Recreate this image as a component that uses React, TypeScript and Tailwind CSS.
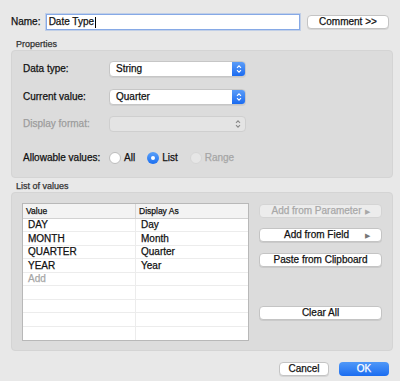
import React from "react";

const font = { fontFamily: '"Liberation Sans", Arial, sans-serif' };

function Button({
  children,
  className = "",
  disabled = false,
  arrow = false,
}: {
  children: React.ReactNode;
  className?: string;
  disabled?: boolean;
  arrow?: boolean;
}) {
  return (
    <div
      className={`relative flex items-center justify-center h-[14px] rounded-[4px] border text-[10px] leading-none ${
        disabled
          ? "bg-[#ececec] border-[#d4d4d4] text-[#a8a8a8]"
          : "bg-white border-[#c4c4c4] text-[#111] shadow-[0_1px_0_rgba(0,0,0,0.08)]"
      } ${className}`}
    >
      <span className={arrow ? "pr-[8px]" : ""}>{children}</span>
      {arrow && (
        <span
          className={`absolute right-[11px] top-1/2 -translate-y-1/2 text-[7px] [-webkit-text-stroke:0px] ${
            disabled ? "text-[#a8a8a8]" : "text-[#777]"
          }`}
        >
          ▶
        </span>
      )}
    </div>
  );
}

function Chevrons({ color }: { color: string }) {
  return (
    <svg width="6" height="10" viewBox="0 0 6 10" fill="none">
      <path d="M1 3.8 L3 1.8 L5 3.8" stroke={color} strokeWidth="1.1" />
      <path d="M1 6.2 L3 8.2 L5 6.2" stroke={color} strokeWidth="1.1" />
    </svg>
  );
}

function Select({ value, disabled = false }: { value?: string; disabled?: boolean }) {
  if (disabled) {
    return (
      <div className="flex items-center w-[137px] h-[16px] rounded-[4px] border border-[#cfcfcf] bg-[#e4e4e4]">
        <div className="flex-1" />
        <div className="w-[14px] flex items-center justify-center">
          <Chevrons color="#8a8a8a" />
        </div>
      </div>
    );
  }
  return (
    <div className="flex items-center w-[137px] h-[16px] rounded-[4px] border border-[#c6c6c6] bg-white shadow-[0_1px_0_rgba(0,0,0,0.06)] overflow-hidden">
      <div className="flex-1 pl-[6px] text-[10px] leading-none text-[#111]">{value}</div>
      <div className="w-[13px] h-full flex items-center justify-center bg-gradient-to-b from-[#5a9cf8] to-[#1a6bf0]">
        <Chevrons color="#ffffff" />
      </div>
    </div>
  );
}

function Radio({ checked = false, disabled = false, label }: { checked?: boolean; disabled?: boolean; label: string }) {
  return (
    <div className="flex items-center gap-[3px]">
      {checked ? (
        <div className="w-[12px] h-[12px] rounded-full bg-gradient-to-b from-[#5aa0f8] to-[#1a6ff0] flex items-center justify-center">
          <div className="w-[4px] h-[4px] rounded-full bg-white" />
        </div>
      ) : (
        <div
          className={`w-[12px] h-[12px] rounded-full border ${
            disabled ? "border-[#d6d6d6] bg-[#e6e6e6]" : "border-[#bdbdbd] bg-white"
          }`}
        />
      )}
      <span className={`text-[10px] leading-none ${disabled ? "text-[#a6a6a6]" : "text-[#111]"}`}>{label}</span>
    </div>
  );
}

const rows: [string, string, boolean?][] = [
  ["DAY", "Day"],
  ["MONTH", "Month"],
  ["QUARTER", "Quarter"],
  ["YEAR", "Year"],
  ["Add", "", true],
  ["", ""],
  ["", ""],
  ["", ""],
  ["", ""],
];

export default function App() {
  return (
    <div
      style={font}
      className="w-[400px] h-[381px] bg-[#e8e8e8] px-[11px] pt-[14px] text-[#111] overflow-hidden [-webkit-text-stroke:0.25px]"
    >
      {/* name row */}
      <div className="flex items-center h-[16px]">
        <span className="w-[35px] text-[10px] leading-none">Name:</span>
        <div className="w-[257px] h-[16px] bg-white border border-[#86a9e6] shadow-[0_0_0_1px_rgba(120,160,230,0.35)] flex items-center pl-[2px] text-[10px] leading-none">
          Date Type<span className="w-px h-[11px] bg-black ml-px" />
        </div>
        <Button className="ml-[7px] w-[83px]">Comment &gt;&gt;</Button>
      </div>

      {/* properties */}
      <div className="mt-[8px] pl-[5px] text-[9px] leading-[12px] text-[#333]">Properties</div>
      <div className="h-[128px] w-[382px] rounded-[4px] bg-[#dcdcdc] border border-[#d4d4d4] pl-[11px] pt-[10px]">
        <div className="flex items-center h-[16px]">
          <span className="w-[86px] text-[10px] leading-none">Data type:</span>
          <Select value="String" />
        </div>
        <div className="flex items-center h-[16px] mt-[12px]">
          <span className="w-[86px] text-[10px] leading-none">Current value:</span>
          <Select value="Quarter" />
        </div>
        <div className="flex items-center h-[16px] mt-[11px]">
          <span className="w-[86px] text-[10px] leading-none text-[#9c9c9c]">Display format:</span>
          <Select disabled />
        </div>
        <div className="flex items-center h-[14px] mt-[19px]">
          <span className="w-[86px] text-[10px] leading-none">Allowable values:</span>
          <div className="flex items-center gap-[12px]">
            <Radio label="All" />
            <Radio label="List" checked />
            <Radio label="Range" disabled />
          </div>
        </div>
      </div>

      {/* list of values */}
      <div className="mt-[2px] pl-[5px] text-[9px] leading-[12px] text-[#333]">List of values</div>
      <div className="h-[159px] w-[382px] rounded-[4px] bg-[#dcdcdc] border border-[#d4d4d4] pl-[10px] pt-[10px] flex">
        <div className="w-[227px] h-[138px] bg-white border border-[#b8b8b8] flex flex-col">
          <div className="flex h-[15px] bg-[#f3f3f3] border-b border-[#d2d2d2] text-[8.5px] leading-none">
            <div className="w-[113px] border-r border-[#d8d8d8] flex items-center pl-[3px]">Value</div>
            <div className="flex-1 flex items-center pl-[3px]">Display As</div>
          </div>
          {rows.map(([v, d, muted], i) => (
            <div key={i} className={`flex h-[13.45px] text-[10px] leading-none ${i < rows.length - 1 ? "border-b border-[#ececec]" : ""}`}>
              <div className={`w-[113px] border-r border-[#ececec] flex items-center pl-[5px] ${muted ? "text-[#a6a6a6]" : "text-[#111]"}`}>
                {v}
              </div>
              <div className="flex-1 flex items-center pl-[5px]">{d}</div>
            </div>
          ))}
        </div>
        <div className="ml-[10px] w-[123px] flex flex-col pt-px">
          <Button disabled arrow>Add from Parameter</Button>
          <Button arrow className="mt-[10px]">Add from Field</Button>
          <Button className="mt-[11px]">Paste from Clipboard</Button>
          <Button className="mt-[39px]">Clear All</Button>
        </div>
      </div>

      {/* footer */}
      <div className="mt-[11px] flex justify-end gap-[10px]">
        <Button className="w-[50px]">Cancel</Button>
        <div className="w-[50px] h-[14px] rounded-[4px] bg-gradient-to-b from-[#4f98f8] to-[#1a6cf0] text-white text-[10px] leading-none flex items-center justify-center">
          OK
        </div>
      </div>
    </div>
  );
}
